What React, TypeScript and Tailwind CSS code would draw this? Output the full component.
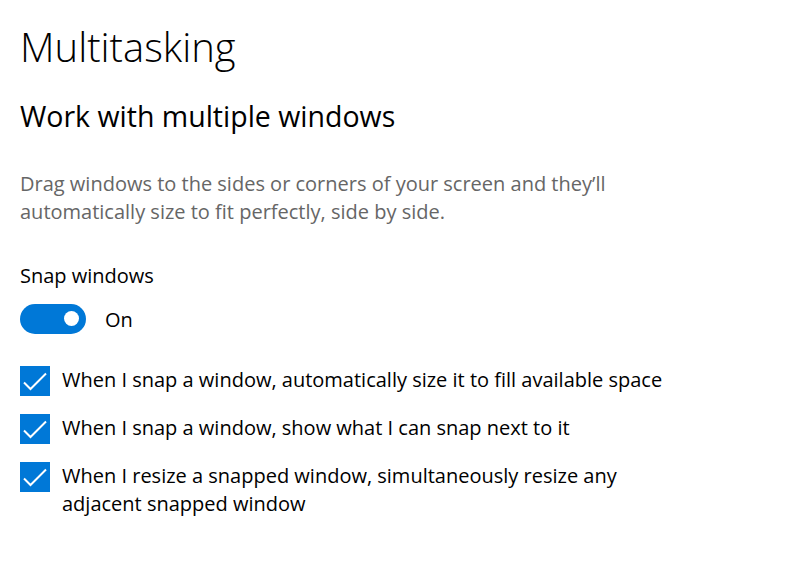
import { useState } from "react";

const font = { fontFamily: '"Open Sans", "Noto Sans", sans-serif' };

function CheckRow({ children }: { children: React.ReactNode }) {
  const [checked, setChecked] = useState(true);
  return (
    <label className="flex items-start gap-[12px] cursor-pointer">
      <button
        type="button"
        onClick={() => setChecked(!checked)}
        className={`w-[30px] h-[30px] shrink-0 flex items-center justify-center ${
          checked ? "bg-[#0078d7]" : "bg-white border-2 border-black"
        }`}
      >
        {checked && (
          <svg width="30" height="30" viewBox="0 0 30 30" fill="none">
            <path d="M4 16.5L10.5 23L26 7.5" stroke="white" strokeWidth="2" />
          </svg>
        )}
      </button>
      <span className="text-[20px] leading-[28px] text-black">{children}</span>
    </label>
  );
}

export default function App() {
  const [snap, setSnap] = useState(true);

  return (
    <div className="w-[801px] h-[576px] bg-white px-[20px] pt-[19px]" style={font}>
      <h1 className="text-[40px] leading-[56px] font-light text-black">Multitasking</h1>
      <h2 className="mt-[21px] text-[28.5px] leading-[40px] text-black">Work with multiple windows</h2>

      <p className="mt-[34px] text-[20px] leading-[28px] text-[#666666]">
        Drag windows to the sides or corners of your screen and they’ll
        <br />
        automatically size to fit perfectly, side by side.
      </p>

      <p className="mt-[36px] text-[20px] leading-[28px] text-black">Snap windows</p>

      <div className="mt-[13px] flex items-center gap-[19px]">
        <button
          type="button"
          onClick={() => setSnap(!snap)}
          className={`w-[66px] h-[30px] rounded-full flex items-center ${
            snap ? "bg-[#0078d7] justify-end pr-[7px]" : "bg-white border-2 border-black justify-start pl-[6px]"
          }`}
        >
          <span className={`w-[15px] h-[15px] rounded-full ${snap ? "bg-white" : "bg-black"}`} />
        </button>
        <span className="pt-[3px] text-[20px] leading-[28px] text-black">{snap ? "On" : "Off"}</span>
      </div>

      <div className="mt-[32px] flex flex-col gap-[18px]">
        <CheckRow>When I snap a window, automatically size it to fill available space</CheckRow>
        <CheckRow>When I snap a window, show what I can snap next to it</CheckRow>
        <CheckRow>
          When I resize a snapped window, simultaneously resize any
          <br />
          adjacent snapped window
        </CheckRow>
      </div>
    </div>
  );
}
